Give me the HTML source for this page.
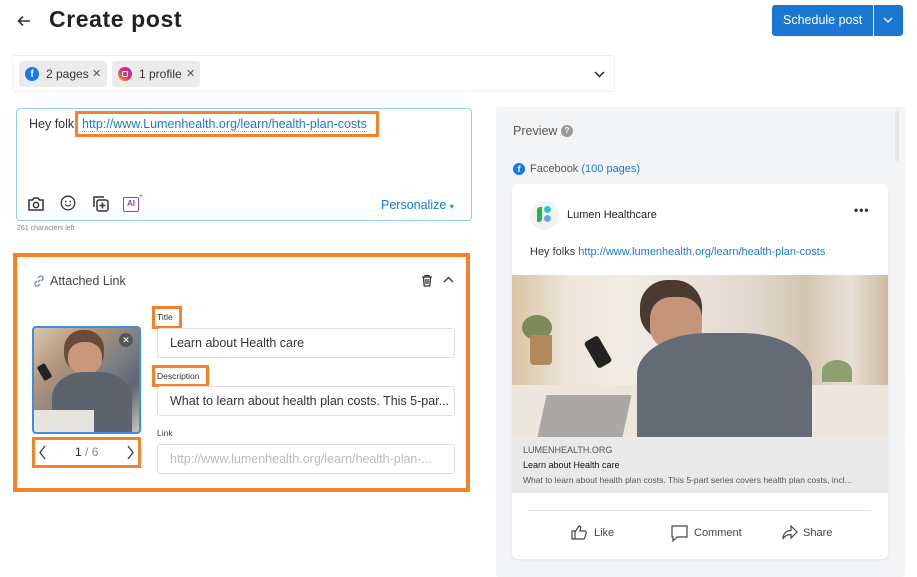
<!DOCTYPE html>
<html><head><meta charset="utf-8"><style>
*{box-sizing:border-box;margin:0;padding:0}
body{width:917px;height:577px;background:#fff;font-family:"Liberation Sans",sans-serif;position:relative;overflow:hidden;color:#333}
.a{position:absolute}
.or{position:absolute;border:3px solid #f5822a}
.inp{position:absolute;border:1px solid #ddd;border-radius:3px;background:#fff;font-size:12.5px;padding-left:12px;line-height:28px;color:#333}
</style></head><body>
<svg class="a" style="left:16px;top:13px" width="16" height="16" viewBox="0 0 16 16"><path d="M14 8H3M7 3.5L2.5 8 7 12.5" stroke="#333" stroke-width="1.6" fill="none"/></svg>
<div class="a" style="left:49px;top:6px;font-size:23px;font-weight:bold;color:#222;letter-spacing:0.6px">Create post</div>
<div class="a" style="left:772px;top:5px;width:131px;height:31px;background:#1a78d4;border-radius:3px;color:#fff;font-size:12.5px;line-height:31px;padding-left:11px">Schedule post</div>
<div class="a" style="left:873px;top:5px;width:1px;height:31px;background:#fff"></div>
<svg class="a" style="left:883px;top:16px" width="10" height="8"><path d="M1 2l4 4 4-4" stroke="#fff" stroke-width="1.3" fill="none"/></svg>

<div class="a" style="left:12px;top:55px;width:603px;height:37px;border:1px solid #eee;border-radius:3px"></div>
<div class="a" style="left:19px;top:61px;width:88px;height:26px;background:#ebebeb;border-radius:3px"></div>
<div class="a" style="left:25px;top:67px;width:14px;height:14px;border-radius:50%;background:#1877f2;color:#fff;font-size:10px;font-weight:bold;text-align:center;line-height:15px">f</div>
<div class="a" style="left:46px;top:67px;font-size:12px;color:#333">2 pages</div>
<div class="a" style="left:92px;top:67px;font-size:11px;color:#555">✕</div>
<div class="a" style="left:112px;top:61px;width:88px;height:26px;background:#ebebeb;border-radius:3px"></div>
<div class="a" style="left:118px;top:67px;width:14px;height:14px;border-radius:50%;background:linear-gradient(45deg,#f9a53a,#e1306c,#833ab4)"></div>
<div class="a" style="left:122px;top:71px;width:6px;height:6px;border:1px solid #fff;border-radius:2px"></div>
<div class="a" style="left:139px;top:67px;font-size:12px;color:#333">1 profile</div>
<div class="a" style="left:186px;top:67px;font-size:11px;color:#555">✕</div>
<svg class="a" style="left:594px;top:70px" width="11" height="8"><path d="M1 2l4.5 4.5L10 2" stroke="#222" stroke-width="1.4" fill="none"/></svg>

<div class="a" style="left:16px;top:108px;width:456px;height:113px;border:1px solid #8fcdf5;border-radius:4px"></div>
<div class="a" style="left:29px;top:117px;font-size:12.5px;color:#333">Hey folk</div>
<div class="or" style="left:75px;top:111px;width:304px;height:26px"></div>
<div class="a" style="left:82px;top:117px;font-size:12.5px;color:#1a78d4;border-bottom:1px dotted #9ac">http://www.Lumenhealth.org/learn/health-plan-costs</div>
<svg class="a" style="left:27px;top:196px" width="18" height="16" viewBox="0 0 18 16"><path d="M2 4h3.5l1.5-2h4l1.5 2H16v10H2z" stroke="#333" stroke-width="1.5" fill="none"/><circle cx="9" cy="9" r="2.6" stroke="#333" stroke-width="1.5" fill="none"/></svg>
<svg class="a" style="left:60px;top:195px" width="16" height="16"><circle cx="8" cy="8" r="6.8" stroke="#333" stroke-width="1.3" fill="none"/><circle cx="5.8" cy="6.5" r=".9" fill="#333"/><circle cx="10.2" cy="6.5" r=".9" fill="#333"/><path d="M5 9.5q3 3 6 0" stroke="#333" stroke-width="1.2" fill="none"/></svg>
<svg class="a" style="left:92px;top:195px" width="18" height="18"><path d="M2 12V2h10" stroke="#333" stroke-width="1.5" fill="none"/><rect x="5" y="5" width="11" height="11" rx="2" stroke="#333" stroke-width="1.5" fill="none"/><path d="M10.5 7.5v6M7.5 10.5h6" stroke="#333" stroke-width="1.5"/></svg>
<div class="a" style="left:123px;top:197px;width:16px;height:15px;border:1.5px solid #8b45d6;border-radius:2px;color:#8b45d6;font-size:8px;font-weight:bold;text-align:center;line-height:12px">AI</div>
<div class="a" style="left:139px;top:193px;color:#8b45d6;font-size:7px">+</div>
<div class="a" style="left:381px;top:198px;font-size:12.5px;color:#1a78d4">Personalize <span style="font-size:8px">▾</span></div>
<div class="a" style="left:17px;top:225px;font-size:7px;color:#888">261 characters left</div>

<div class="a" style="left:13px;top:253px;width:457px;height:239px;border:4px solid #f5822a;background:#fff"></div>
<svg class="a" style="left:33px;top:275px" width="12" height="12"><path d="M5 7l2-2M4 6L2.5 7.5a2 2 0 003 3L7 9M8 6l1.5-1.5a2 2 0 00-3-3L5 3" stroke="#789" stroke-width="1.3" fill="none"/></svg>
<div class="a" style="left:50px;top:274px;font-size:12.5px;color:#444">Attached Link</div>
<svg class="a" style="left:421px;top:274px" width="12" height="13"><path d="M1 3h10M4 3V1.5h4V3M2.5 3l.7 9h5.6l.7-9M5 5v5M7 5v5" stroke="#333" stroke-width="1.3" fill="none"/></svg>
<svg class="a" style="left:443px;top:276px" width="11" height="8"><path d="M1 6l4.5-4.5L10 6" stroke="#333" stroke-width="1.3" fill="none"/></svg>

<div class="a" style="left:32px;top:326px;width:109px;height:108px;border:2px solid #3d8ee0;border-radius:4px;overflow:hidden;background:linear-gradient(135deg,#d9c6ad 0%,#b09477 30%,#7c7f86 55%,#5e656f 75%,#c9c4bd 100%)">
<div class="a" style="left:30px;top:2px;width:40px;height:42px;border-radius:45%;background:#6a4a38"></div>
<div class="a" style="left:34px;top:14px;width:34px;height:32px;border-radius:45%;background:#c9987c"></div>
<div class="a" style="left:18px;top:44px;width:80px;height:64px;border-radius:40% 40% 0 0;background:#5c636c"></div>
<div class="a" style="left:0;top:82px;width:60px;height:26px;background:#e7e4df"></div>
<div class="a" style="left:6px;top:36px;width:9px;height:16px;background:#222;border-radius:2px;transform:rotate(-30deg)"></div>
</div>
<div class="a" style="left:119px;top:333px;width:14px;height:14px;border-radius:50%;background:#555;color:#fff;font-size:9px;text-align:center;line-height:14px">✕</div>
<div class="or" style="left:32px;top:437px;width:109px;height:31px;background:#fff"></div>
<svg class="a" style="left:38px;top:445px" width="9" height="15"><path d="M7 1L2 7.5 7 14" stroke="#444" stroke-width="1.4" fill="none"/></svg>
<div class="a" style="left:75px;top:445px;font-size:12px;color:#333"><span style="color:#222">1</span> <span style="color:#888">/ 6</span></div>
<svg class="a" style="left:126px;top:445px" width="9" height="15"><path d="M2 1l5 6.5L2 14" stroke="#444" stroke-width="1.4" fill="none"/></svg>

<div class="or" style="left:152px;top:306px;width:30px;height:23px"></div>
<div class="a" style="left:157px;top:312px;font-size:8.5px;color:#333">Title</div>
<div class="inp" style="left:157px;top:328px;width:298px;height:30px">Learn about Health care</div>
<div class="or" style="left:152px;top:365px;width:57px;height:22px"></div>
<div class="a" style="left:157px;top:371px;font-size:8.5px;color:#333">Description</div>
<div class="inp" style="left:157px;top:386px;width:298px;height:30px">What to learn about health plan costs. This 5-par...</div>
<div class="a" style="left:157px;top:428px;font-size:8.5px;color:#444">Link</div>
<div class="inp" style="left:157px;top:444px;width:298px;height:30px;color:#bbb">http://www.lumenhealth.org/learn/health-plan-...</div>

<div class="a" style="left:496px;top:107px;width:409px;height:470px;background:#f3f4f6;border-radius:3px"></div>
<div class="a" style="left:895px;top:111px;width:4px;height:50px;background:#e3e4e6;border-radius:2px"></div>
<div class="a" style="left:513px;top:124px;font-size:12.5px;color:#555">Preview</div>
<div class="a" style="left:561px;top:125px;width:12px;height:12px;border-radius:50%;background:#999;color:#fff;font-size:8px;text-align:center;line-height:12px;font-weight:bold">?</div>
<div class="a" style="left:513px;top:163px;width:12px;height:12px;border-radius:50%;background:#1877f2;color:#fff;font-size:9px;font-weight:bold;text-align:center;line-height:13px">f</div>
<div class="a" style="left:530px;top:163px;font-size:11px;color:#555">Facebook <span style="color:#1a78d4">(100 pages)</span></div>

<div class="a" style="left:512px;top:184px;width:376px;height:375px;background:#fff;border-radius:6px;box-shadow:0 1px 2px rgba(0,0,0,.08);overflow:hidden">
<div class="a" style="left:18px;top:17px;width:29px;height:29px;border-radius:50%;background:#eef3f6"></div>
<div class="a" style="left:25px;top:23px;width:5px;height:15px;border-radius:3px 0 3px 0;background:#2bb34a"></div>
<div class="a" style="left:32px;top:22px;width:7px;height:7px;border-radius:50%;background:#2ec4c4"></div>
<div class="a" style="left:32px;top:31px;width:7px;height:7px;border-radius:50%;background:#6aa6e0"></div>
<div class="a" style="left:55px;top:25px;font-size:11px;color:#222">Lumen Healthcare</div>
<div class="a" style="left:342px;top:19px;font-size:12px;color:#333;letter-spacing:1px;font-weight:bold">•••</div>
<div class="a" style="left:18px;top:62px;font-size:11px;color:#333">Hey folks <span style="color:#1a78d4">http://www.lumenhealth.org/learn/health-plan-costs</span></div>
<div class="a" style="left:0;top:91px;width:376px;height:162px;overflow:hidden;background:linear-gradient(90deg,#d8c4a6 0%,#eee6da 15%,#f1ede6 30%,#e9e4dc 45%,#e0d8cc 65%,#d4c5b0 78%,#e9e1d6 90%,#cdb9a0 100%)">
<div class="a" style="left:10px;top:40px;width:30px;height:25px;border-radius:50%;background:#7a8a5a"></div>
<div class="a" style="left:18px;top:60px;width:22px;height:30px;background:#b08a5a;border-radius:0 0 4px 4px"></div>
<div class="a" style="left:0;top:110px;width:376px;height:52px;background:#ece6dd"></div>
<div class="a" style="left:128px;top:5px;width:62px;height:60px;border-radius:45%;background:#4c3a30"></div>
<div class="a" style="left:138px;top:22px;width:52px;height:52px;border-radius:40%;background:#c69479"></div>
<div class="a" style="left:125px;top:58px;width:175px;height:104px;border-radius:40% 40% 0 0;background:#656b74"></div>
<div class="a" style="left:30px;top:120px;width:85px;height:42px;background:#a9a8a6;transform:skewX(-12deg)"></div>
<div class="a" style="left:78px;top:62px;width:16px;height:30px;background:#222;border-radius:3px;transform:rotate(-30deg)"></div>
<div class="a" style="left:310px;top:85px;width:30px;height:22px;border-radius:50% 50% 0 0;background:#8fa070"></div>
</div>
<div class="a" style="left:0;top:253px;width:376px;height:56px;background:#e9e9ea"></div>
<div class="a" style="left:11px;top:261px;font-size:9px;color:#555">LUMENHEALTH.ORG</div>
<div class="a" style="left:11px;top:276px;font-size:9px;color:#111">Learn about Health care</div>
<div class="a" style="left:11px;top:291px;font-size:8.5px;color:#555">What to learn about health plan costs. This 5-part series covers health plan costs, incl...</div>
<div class="a" style="left:16px;top:326px;width:343px;height:1px;background:#e3e3e3"></div>
<svg class="a" style="left:59px;top:340px" width="16" height="16"><path d="M1 7h3v8H1zM4 8l4-6c1.5 0 2 1 1.6 2.5L9 7h5c1 0 1.5 1 1.2 2l-1.5 5c-.3.7-.8 1-1.5 1H4" stroke="#444" stroke-width="1.2" fill="none"/></svg>
<div class="a" style="left:82px;top:343px;font-size:11px;color:#444">Like</div>
<svg class="a" style="left:159px;top:341px" width="17" height="17"><path d="M1 1h15v11H6l-4 4V12H1z" stroke="#444" stroke-width="1.2" fill="none"/></svg>
<div class="a" style="left:182px;top:343px;font-size:11px;color:#444">Comment</div>
<svg class="a" style="left:270px;top:341px" width="16" height="15"><path d="M9 1l6 6-6 6V9.5C5 9.5 2.5 11 1 14c0-5 3-8.5 8-8.5z" stroke="#444" stroke-width="1.2" fill="none"/></svg>
<div class="a" style="left:291px;top:343px;font-size:11px;color:#444">Share</div>
</div>
</body></html>
